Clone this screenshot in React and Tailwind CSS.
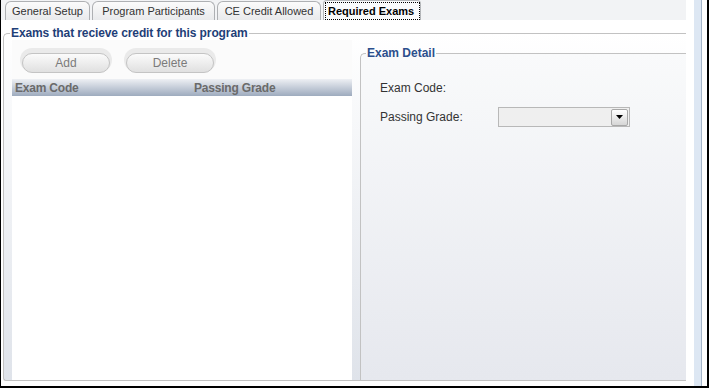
import React from "react";

const tabs = [
  { label: "General Setup", w: "w-[85px]" },
  { label: "Program Participants", w: "w-[123px]" },
  { label: "CE Credit Allowed", w: "w-[104px]" },
];

function TabBar() {
  return (
    <div className="h-[20px] bg-[#f2f3f5] flex items-end pl-[4px] gap-[2px]">
      {tabs.map((t) => (
        <div
          key={t.label}
          className={`${t.w} h-[19px] border border-b-0 border-[#aeb0b3] rounded-t-[6px] bg-linear-to-b from-[#fbfbfb] to-[#e9eaec] text-[11px] leading-[18px] text-[#333] text-center whitespace-nowrap`}
        >
          {t.label}
        </div>
      ))}
      <div className="w-[98px] h-[20px] border border-b-0 border-[#b4b6b9] rounded-t-[4px] bg-[#fafbfc] pl-[1px] pt-[1px]">
        <div className="h-[18px] border border-dotted border-black text-[11px] font-bold leading-[16px] text-black pl-[2px] whitespace-nowrap">
          Required Exams
        </div>
      </div>
    </div>
  );
}

function PillButton({ children }) {
  return (
    <div className="w-[92px] h-[24px] rounded-full bg-[#eaeaea] p-[2px]">
      <button className="w-full h-full rounded-full border border-[#c4c4c4] bg-linear-to-b from-[#fbfbfb] to-[#e0e0e0] text-[12px] leading-[18px] text-[#7b7b7b]">
        {children}
      </button>
    </div>
  );
}

function ExamList() {
  return (
    <div className="w-[348px] pl-[8px] flex flex-col">
      <div className="h-[39px] bg-[#fbfbfb] flex gap-[12px] pl-[8px] pt-[8px]">
        <PillButton>Add</PillButton>
        <PillButton>Delete</PillButton>
      </div>
      <div className="h-[17px] flex items-center bg-linear-to-b from-[#eef0f4] to-[#9eabbe] text-[12px] font-bold text-[#6a6a6a] tracking-[-0.2px]">
        <div className="w-[182px] pl-[3px]">Exam Code</div>
        <div>Passing Grade</div>
      </div>
      <div className="flex-1 bg-white" />
    </div>
  );
}

function ExamDetail() {
  return (
    <fieldset className="mt-[6px] w-[326px] border-l border-t border-[#c2c2c2] rounded-tl-[5px] bg-linear-to-b from-[#f9fafb] to-[#e6e8ee]">
      <legend className="ml-[5px] px-[1px] text-[12px] leading-[14px] font-bold text-[#2c4f8c]">
        Exam Detail
      </legend>
      <div className="pl-[19px] pt-[21px] text-[12px] text-[#333]">
        <div className="leading-[14px]">Exam Code:</div>
        <div className="mt-[12px] h-[20px] flex items-center">
          <div className="w-[118px]">Passing Grade:</div>
          <div className="w-[132px] h-[20px] border border-[#b8b8b8] bg-[#efefef] flex justify-end items-center pr-[1px]">
            <div className="w-[17px] h-[17px] rounded-[2px] border border-[#a8a8a8] bg-linear-to-b from-white to-[#d6d6d6] flex items-center justify-center">
              <svg width="7" height="4" viewBox="0 0 7 4">
                <path d="M0 0h7L3.5 4z" fill="#000" />
              </svg>
            </div>
          </div>
        </div>
      </div>
    </fieldset>
  );
}

export default function App() {
  return (
    <div className="w-[709px] h-[388px] bg-white border-l border-r-2 border-b-2 border-black flex font-['Liberation_Sans',Arial,sans-serif] overflow-hidden">
      <div className="w-[685px] flex flex-col">
        <TabBar />
        <fieldset className="mt-[6px] ml-[2px] h-[355px] border border-r-0 border-[#c2c2c2] rounded-tl-[5px] rounded-bl-[3px] bg-linear-to-b from-white to-[#dfe3ea]">
          <legend className="ml-[6px] px-[1px] text-[12px] leading-[14px] font-bold text-[#1f3f78] tracking-[-0.1px]">
            Exams that recieve credit for this program
          </legend>
          <div className="h-[340px] flex">
            <ExamList />
            <div className="w-[8px]" />
            <ExamDetail />
          </div>
        </fieldset>
      </div>
      <div className="w-[8px]" />
      <div className="w-[8px] bg-[#dde7f3] border-r border-[#a4b4c8]" />
      <div className="w-[5px]" />
    </div>
  );
}
